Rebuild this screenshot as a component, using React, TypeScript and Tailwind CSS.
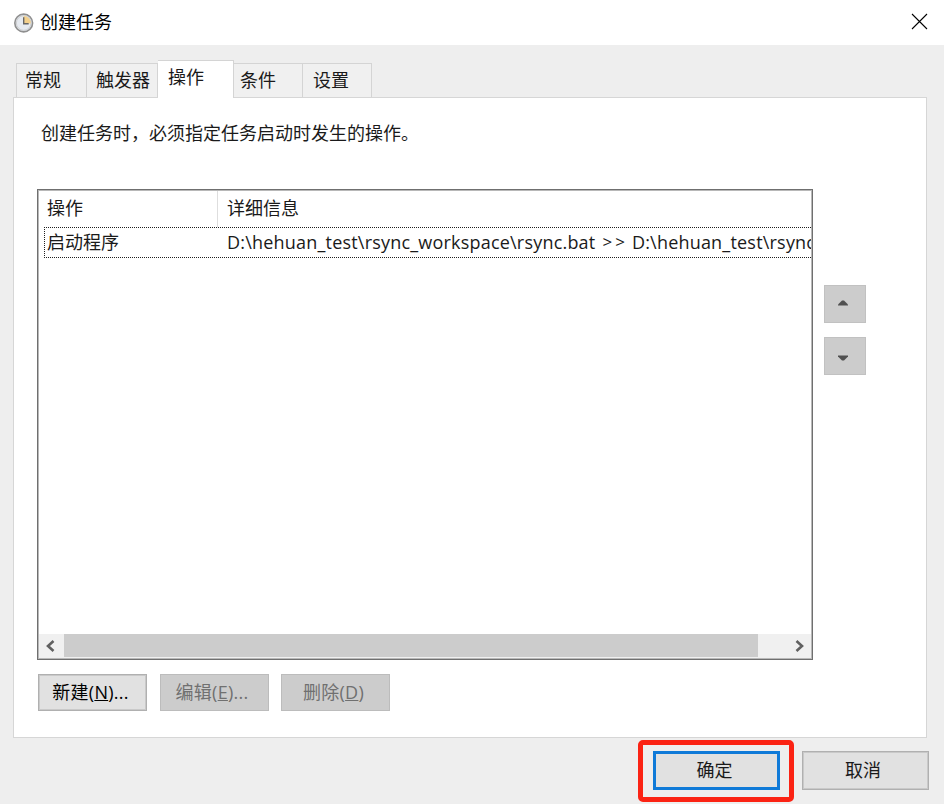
import { clsx } from "clsx";
import type { ReactNode } from "react";

const tabs = [
  { label: "常规", className: "w-[71px] pl-[8px]" },
  { label: "触发器", className: "w-[71px] pl-[9px]" },
  { label: "操作", className: "w-[76px] pl-[10px]", active: true },
  { label: "条件", className: "w-[69px] pl-[6px]" },
  { label: "设置", className: "w-[69px] pl-[10px]" },
];

function ClockIcon() {
  return (
    <svg width="20" height="20" viewBox="0 0 20 20" className="shrink-0">
      <circle cx="9.7" cy="10" r="8.9" fill="#dfe4ea" stroke="#8f8f8f" strokeWidth="1.6" />
      <circle cx="9.7" cy="10" r="7.3" fill="#e6eaf0" stroke="#c8c8c8" strokeWidth="0.8" />
      <path d="M9.7 10.5V3a7 7 0 0 1 7 7.5z" fill="#f3d08c" />
      <path d="M9.7 4.2v6.5h5" fill="none" stroke="#666" strokeWidth="1.4" />
    </svg>
  );
}

function Button({ children, disabled }: { children: ReactNode; disabled?: boolean }) {
  return (
    <button
      disabled={disabled}
      className={clsx(
        "flex h-[37px] w-[109px] items-center justify-center whitespace-nowrap border pb-[2px] pr-[4px] text-[18px] tracking-[0.25px]",
        disabled
          ? "border-[#bcbcbc] bg-[#cccccc] text-[#707070]"
          : "border-[#b0b0b0] bg-[#e1e1e1] text-black shadow-[inset_0_0_0_1px_#c9c9c9]"
      )}
    >
      {children}
    </button>
  );
}

function SpinButton({ up }: { up?: boolean }) {
  return (
    <button className="flex h-[38px] w-[42px] items-center justify-center border border-[#c1c1c1] bg-[#cccccc] pr-[4px]">
      <svg width="10" height="6" viewBox="0 0 10 6" className={up ? "mb-[2px]" : "mt-[3px]"}>
        <path d={up ? "M0 5.5V4.5L4 .5h2l4 4v1z" : "M0 .5v1l4 4h2l4-4v-1z"} fill="#505050" />
      </svg>
    </button>
  );
}

export default function App() {
  return (
    <div className="flex h-[804px] w-[944px] flex-col overflow-hidden bg-[#eeeeee] font-['Open_Sans','Noto_Sans_CJK_SC',sans-serif] text-[18px] leading-[24px] text-[#1a1a1a]">
      <header className="flex h-[45px] shrink-0 items-center bg-white pl-[14px] pr-[16px] text-black">
        <ClockIcon />
        <h1 className="ml-[6px] pb-[2px]">创建任务</h1>
        <svg width="17" height="17" viewBox="0 0 17 17" className="mb-[2px] ml-auto">
          <path d="M1 1l15 15M16 1L1 16" stroke="#000" strokeWidth="1.1" />
        </svg>
      </header>

      <main className="flex flex-col px-[13px] pt-[15px]">
        <nav className="flex h-[37px] items-end pl-[3px]">
          {tabs.map((tab) => (
            <div
              key={tab.label}
              className={clsx(
                "flex shrink-0 border-t border-[#d4d4d4]",
                tab.className,
                tab.active
                  ? "relative z-10 -mb-px h-[38px] border-r bg-white pt-[4px]"
                  : "h-[34px] border-r bg-[#f0f0f0] pt-[4px] first:border-l"
              )}
            >
              {tab.label}
            </div>
          ))}
        </nav>

        <section className="flex h-[641px] w-[914px] flex-col border border-[#d6d6d6] bg-white pl-[23px] pt-[23px]">
          <p className="pl-[4px]">创建任务时，必须指定任务启动时发生的操作。</p>

          <div className="mt-[44px] flex">
            <div className="flex h-[471px] w-[776px] flex-col border border-[#6f6f6f] bg-white p-px shadow-[inset_0_0_0_1px_#b8b8b8]">
              <div className="flex h-[36px] shrink-0">
                <div className="w-[179px] border-r border-[#dedede] pl-[8px] pt-[5px]">操作</div>
                <div className="pl-[9px] pt-[5px]">详细信息</div>
              </div>
              <div className="ml-[5px] flex h-[31px] shrink-0 items-center overflow-hidden whitespace-nowrap border border-r-0 border-dotted border-[#1f1f1f] pb-[2px]">
                <span className="w-[182px] shrink-0 pl-[2px]">启动程序</span>
                <span className="tracking-[0.2px]">{"D:\\hehuan_test\\rsync_workspace\\rsync.bat"}</span>
                <span className="ml-[7px] text-[17px] tracking-[3px]">{">>"}</span>
                <span className="ml-[4px] tracking-[0.2px]">{"D:\\hehuan_test\\rsync"}</span>
              </div>
              <div className="mt-auto flex h-[24px] items-center bg-[#f0f0f0]">
                <div className="flex w-[25px] justify-center pr-[4px]">
                  <svg width="10" height="12" viewBox="0 0 10 12">
                    <path d="M8.5 1L3 6l5.5 5" fill="none" stroke="#606060" strokeWidth="2.6" />
                  </svg>
                </div>
                <div className="mb-px h-[23px] w-[694px] bg-[#cccccc]" />
                <div className="ml-auto mr-[6px]">
                  <svg width="10" height="12" viewBox="0 0 10 12">
                    <path d="M1.5 1L7 6l-5.5 5" fill="none" stroke="#606060" strokeWidth="2.6" />
                  </svg>
                </div>
              </div>
            </div>
            <div className="ml-[11px] mt-[96px] flex flex-col gap-[14px]">
              <SpinButton up />
              <SpinButton />
            </div>
          </div>

          <div className="ml-px mt-[14px] flex gap-[12.5px]">
            <Button>
              新建(<u>N</u>)...
            </Button>
            <Button disabled>
              编辑(<u>E</u>)...
            </Button>
            <Button disabled>
              删除(<u>D</u>)
            </Button>
          </div>
        </section>
      </main>

      <footer className="flex justify-end gap-[22px] pr-[15px] pt-[13px]">
        <div className="relative">
          <button className="flex h-[39px] w-[127px] items-center justify-center border-[3px] border-[#0f7ad8] bg-[#e1e1e1] pb-px pr-[4px]">
            确定
          </button>
          {/* highlight frame around the confirm button */}
          <div className="pointer-events-none absolute -left-[15px] -top-[11px] h-[62px] w-[156px] rounded-[5px] border-[5px] border-[#fb2314]" />
        </div>
        <button className="flex h-[39px] w-[127px] items-center justify-center border border-[#b0b0b0] bg-[#e1e1e1] pb-px pr-[5px] shadow-[inset_0_0_0_1px_#c9c9c9]">
          取消
        </button>
      </footer>
    </div>
  );
}
